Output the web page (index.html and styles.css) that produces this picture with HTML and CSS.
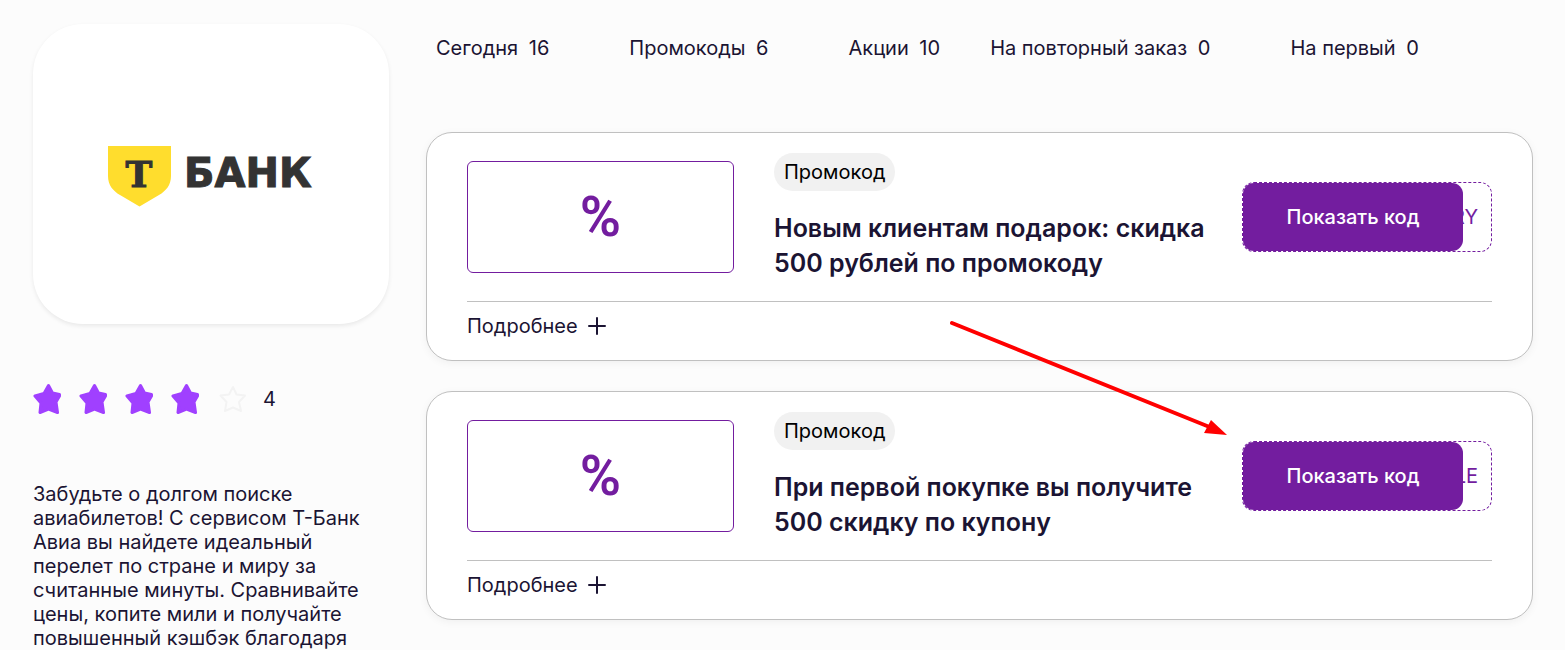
FILE: index.html
```html
<!DOCTYPE html>
<html lang="ru">
    <head>
        <meta charset="UTF-8">
        <meta name="viewport" content="width=device-width, initial-scale=1.0">
        <title>Т-Банк Авиа</title>
        <link rel="stylesheet" href="styles.css">
    </head>
    <body>
        <svg class="sprite" aria-hidden="true">
            <symbol id="star" viewBox="0 0 30 32">
                <path d="M15.500 2.500 L19.500 10 L26.500 11.500 L26.500 13 L23 19 L24.500 29.500 L15.500 26 L7 29.500 L8 20 L2 13 L11 10.500 Z"/>
            </symbol>
            <symbol id="star-empty" viewBox="0 0 30 32">
                <path d="M16 4 L19.500 11.500 L28 12.500 L22 19 L24 28 L16 24.500 L8 28 L9.500 19 L3.500 12.500 L12 11.500 Z"/>
            </symbol>
        </svg>
        <div class="page">
            <aside class="sidebar">
                <div class="shop-logo">
                    <svg width="208" height="58" viewBox="0 0 208 58" role="img" aria-label="Т-Банк">
                        <path d="M1 1 H64 V31 C64 40 59 46 52 50 L32.500 61.500 L13 50 C6 46 1 40 1 31 Z" fill="#ffdd2d"/>
                        <text class="logo-letter" x="32" y="42" text-anchor="middle">Т</text>
                        <text class="logo-name" x="77" y="42">БАНК</text>
                    </svg>
                </div>
                <div class="rating">
                    <svg class="star"><use href="#star"/></svg>
                    <svg class="star"><use href="#star"/></svg>
                    <svg class="star"><use href="#star"/></svg>
                    <svg class="star"><use href="#star"/></svg>
                    <svg class="star star-empty"><use href="#star-empty"/></svg>
                    <span>4</span>
                </div>
                <p class="about">Забудьте о долгом поиске авиабилетов! С сервисом Т-Банк Авиа вы найдете идеальный перелет по стране и миру за считанные минуты. Сравнивайте цены, копите мили и получайте повышенный кэшбэк благодаря</p>
            </aside>
            <main class="content">
                <nav class="filters">
                    <button class="filter">Сегодня <span>16</span></button>
                    <button class="filter">Промокоды <span>6</span></button>
                    <button class="filter filter-narrow">Акции <span>10</span></button>
                    <button class="filter">На повторный заказ <span>0</span></button>
                    <button class="filter">На первый <span>0</span></button>
                </nav>
                <div class="offers">
                    <article class="offer">
                        <div class="offer-top">
                            <div class="offer-image">%</div>
                            <div class="offer-text">
                                <span class="badge">Промокод</span>
                                <h2>Новым клиентам подарок: скидка 500 рублей по промокоду</h2>
                            </div>
                            <div class="coupon">
                                <span>RY</span>
                                <button class="coupon-button">Показать код</button>
                            </div>
                        </div>
                        <button class="more">Подробнее
                            <svg width="18" height="18" viewBox="0 0 18 18"><path d="M9 1 V17 M1 9 H17"/></svg>
                        </button>
                    </article>
                    <article class="offer">
                        <div class="offer-top">
                            <div class="offer-image">%</div>
                            <div class="offer-text">
                                <span class="badge">Промокод</span>
                                <h2>При первой покупке вы получите 500 скидку по купону</h2>
                            </div>
                            <div class="coupon">
                                <span>LE</span>
                                <button class="coupon-button">Показать код</button>
                            </div>
                        </div>
                        <button class="more">Подробнее
                            <svg width="18" height="18" viewBox="0 0 18 18"><path d="M9 1 V17 M1 9 H17"/></svg>
                        </button>
                    </article>
                    <svg class="arrow" width="290" height="130" viewBox="0 0 290 130" aria-hidden="true">
                        <path d="M12 11 L272 116" stroke="#f00" stroke-width="4" stroke-linecap="round"/>
                        <path d="M287 123 L271 108 L264 121 Z" fill="#f00"/>
                    </svg>
                </div>
            </main>
        </div>
    </body>
</html>
```
FILE: styles.css
```css
* {
    box-sizing: border-box;
}
body {
    margin: 0;
    font-family: Inter, sans-serif;
    font-size: 20px;
    line-height: 24px;
    color: #1b1433;
    background-color: #fcfcfc;
}
button {
    font: inherit;
    color: inherit;
    background: none;
    border: none;
    padding: 0;
    cursor: pointer;
}
.sprite {
    display: none;
}
.page {
    display: grid;
    grid-template-columns: 356px 1fr;
    gap: 37px;
    padding: 24px 32px 0 33px;
}
.shop-logo {
    display: flex;
    justify-content: center;
    align-items: center;
    height: 300px;
    background-color: #fff;
    border-radius: 50px;
    box-shadow: 0 2px 4px rgba(0, 0, 0, 0.08);
}
.shop-logo svg {
    overflow: visible;
}
.logo-letter {
    font: bold 36px "DejaVu Serif", serif;
    fill: #333;
    stroke: #333;
    stroke-width: 1;
}
.logo-name {
    font: bold 40px "DejaVu Sans", sans-serif;
    fill: #333;
    stroke: #333;
    stroke-width: 1;
}
.rating {
    display: flex;
    align-items: center;
    gap: 16px;
    margin-top: 59px;
}
.star {
    width: 30px;
    height: 32px;
    fill: #a040ff;
    stroke: #a040ff;
    stroke-width: 3;
    stroke-linejoin: round;
}
.star-empty {
    fill: none;
    stroke: #f3f3f3;
    stroke-width: 2;
}
.about {
    margin: 67px 0 0;
}
.filters {
    display: flex;
    padding: 12px 10px;
    margin-bottom: 60px;
}
.filter {
    margin-right: 80px;
    white-space: nowrap;
}
.filter span {
    margin-left: 5px;
}
.filter-narrow {
    margin-right: 50px;
}
.offers {
    position: relative;
    display: flex;
    flex-direction: column;
    gap: 30px;
}
.offer {
    padding: 20px 40px 22px;
    background-color: #fff;
    border: 1px solid #c0c0c0;
    border-radius: 26px;
    box-shadow: 0 2px 8px rgba(0, 0, 0, 0.05);
}
.offer-top {
    display: flex;
    align-items: center;
    padding-bottom: 20px;
    border-bottom: 1px solid #c0c0c0;
}
.offer-image {
    display: flex;
    justify-content: center;
    align-items: center;
    flex-shrink: 0;
    width: 267px;
    height: 112px;
    margin-right: 40px;
    border: 1px solid #731d9f;
    border-radius: 6px;
    font: 600 56px Roboto, sans-serif;
    color: #731d9f;
}
.offer-text {
    flex: 1;
    margin-right: 30px;
}
.badge {
    display: inline-block;
    padding: 7px 10px;
    border-radius: 19px;
    background-color: #f1f1f1;
    color: #000;
}
.offer h2 {
    margin: 20px 0 0;
    font-size: 25px;
    line-height: 35px;
    font-weight: 600;
}
.coupon {
    position: relative;
    display: flex;
    justify-content: flex-end;
    align-items: center;
    flex-shrink: 0;
    width: 250px;
    height: 70px;
    padding-right: 13px;
    border: 1px dashed #731d9f;
    border-radius: 12px;
    color: #731d9f;
}
.coupon-button {
    position: absolute;
    top: 0;
    left: 0;
    width: 220px;
    height: 100%;
    border-radius: 11px;
    background-color: #731d9f;
    color: #fff;
    font-weight: 500;
}
.more {
    display: flex;
    align-items: center;
    gap: 10px;
    margin-top: 12px;
}
.more svg {
    fill: none;
    stroke: #1b1433;
    stroke-width: 2;
    stroke-linecap: round;
}
.arrow {
    position: absolute;
    top: 180px;
    left: 514px;
}
```
